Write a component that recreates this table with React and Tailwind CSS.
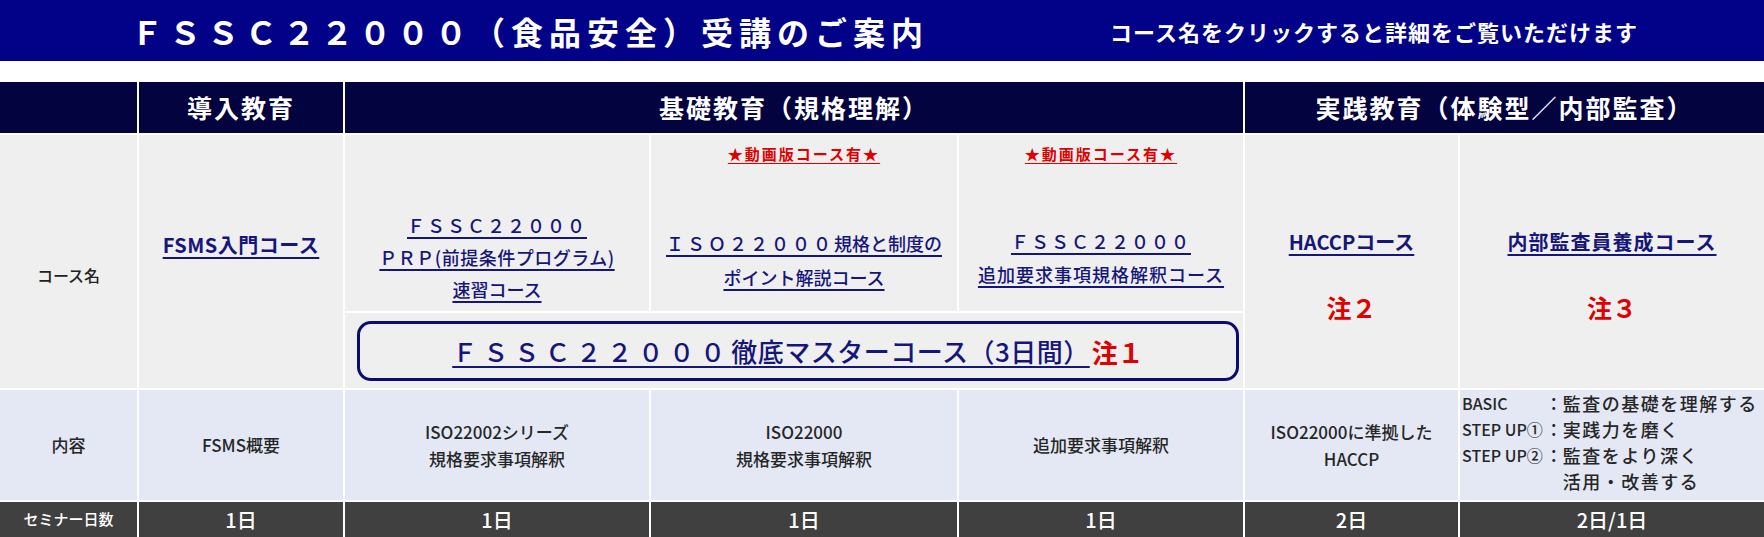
import React from "react";

const font = "font-['Noto_Sans_CJK_JP','Noto_Sans',sans-serif]";
const link = "text-[#16167a] underline underline-offset-[4px] decoration-[1.5px]";

function Star() {
  return (
    <div className="pt-[9px] text-[15px] leading-[20px] font-bold tracking-[2px] text-[#e00000] underline underline-offset-[3px]">
      ★動画版コース有★
    </div>
  );
}

export default function App() {
  return (
    <div className={`w-[1764px] h-[537px] bg-white ${font}`}>
      {/* banner */}
      <div className="h-[61px] bg-[#020289] flex items-center text-white">
        <div className="pl-[131px] text-[32px] font-bold tracking-[6px] leading-none whitespace-nowrap">
          ＦＳＳＣ２２０００（食品安全）受講のご案内
        </div>
        <div className="ml-auto mr-[126px] text-[22px] font-bold tracking-[1px] leading-none whitespace-nowrap">
          コース名をクリックすると詳細をご覧いただけます
        </div>
      </div>

      <div className="mt-[21px] grid grid-cols-[137px_204px_304px_306px_284px_213px_304px] grid-rows-[51px_176px_75px_110px_35px] gap-[2px] bg-white">
        {/* header row */}
        <div className="bg-[#03033f]" />
        <div className="bg-[#03033f] flex items-center justify-center text-white text-[25px] font-bold tracking-[2px]">
          導入教育
        </div>
        <div className="col-span-3 bg-[#03033f] flex items-center justify-center text-white text-[25px] font-bold tracking-[2px]">
          基礎教育（規格理解）
        </div>
        <div className="col-span-2 bg-[#03033f] flex items-center justify-center text-white text-[25px] font-bold tracking-[2px]">
          実践教育（体験型／内部監査）
        </div>

        {/* course name row */}
        <div className="row-span-2 bg-[#efefef] flex items-center justify-center pt-[27px] text-[16px] font-medium text-[#222]">
          コース名
        </div>
        <div className="row-span-2 bg-[#efefef] flex justify-center pt-[96px]">
          <span className={`${link} text-[20px] leading-[28px] font-bold tracking-[0.5px] h-fit`}>FSMS入門コース</span>
        </div>
        <div className="bg-[#efefef] flex flex-col items-center pt-[74px] text-[18px] leading-[32px] font-medium">
          <span className={`${link} tracking-[2px]`}>ＦＳＳＣ２２０００</span>
          <span className={`${link} tracking-[0.5px]`}>ＰＲＰ(前提条件プログラム)</span>
          <span className={link}>速習コース</span>
        </div>
        <div className="bg-[#efefef] flex flex-col items-center">
          <Star />
          <div className="mt-[62px] flex flex-col items-center text-[18px] leading-[34px] font-medium whitespace-nowrap">
            <span className={link}>
              <span className="tracking-[3px]">ＩＳＯ２２０００</span>規格と制度の
            </span>
            <span className={link}>ポイント解説コース</span>
          </div>
        </div>
        <div className="bg-[#efefef] flex flex-col items-center">
          <Star />
          <div className="mt-[61px] flex flex-col items-center text-[18px] leading-[33px] font-medium whitespace-nowrap">
            <span className={`${link} tracking-[2px]`}>ＦＳＳＣ２２０００</span>
            <span className={`${link} tracking-[1px]`}>追加要求事項規格解釈コース</span>
          </div>
        </div>
        <div className="row-span-2 bg-[#efefef] flex flex-col items-center pt-[93px]">
          <span className={`${link} text-[20px] leading-[28px] font-bold`}>HACCPコース</span>
          <span className="mt-[35px] text-[25px] leading-[32px] font-bold text-[#e00000]">注２</span>
        </div>
        <div className="row-span-2 bg-[#efefef] flex flex-col items-center pt-[93px]">
          <span className={`${link} text-[20px] leading-[28px] font-bold tracking-[1px]`}>内部監査員養成コース</span>
          <span className="mt-[35px] text-[25px] leading-[32px] font-bold text-[#e00000]">注３</span>
        </div>

        {/* master course */}
        <div className="col-span-3 bg-[#efefef] pt-[8px] pl-[12px] pr-[4px]">
          <div className="h-[60px] rounded-[14px] border-[3px] border-[#0c0c70] flex items-center justify-center font-medium whitespace-nowrap">
            <span className={`${link} decoration-[2px]`}>
              <span className="text-[25px] tracking-[6px]">ＦＳＳＣ２２０００</span>
              <span className="text-[26px] tracking-[0.5px]">徹底マスターコース（3日間）</span>
            </span>
            <span className="text-[26px] text-[#e00000] font-bold pl-[2px]">注１</span>
          </div>
        </div>

        {/* content row */}
        <div className="bg-[#e4e8f4] flex items-center justify-center text-[17px] font-medium text-[#262626]">内容</div>
        <div className="bg-[#e4e8f4] flex items-center justify-center text-[17px] font-medium text-[#262626]">FSMS概要</div>
        <div className="bg-[#e4e8f4] flex flex-col items-center justify-center text-[17px] leading-[27px] font-medium text-[#262626]">
          <span>ISO22002シリーズ</span>
          <span>規格要求事項解釈</span>
        </div>
        <div className="bg-[#e4e8f4] flex flex-col items-center justify-center text-[17px] leading-[27px] font-medium text-[#262626]">
          <span>ISO22000</span>
          <span>規格要求事項解釈</span>
        </div>
        <div className="bg-[#e4e8f4] flex items-center justify-center text-[17px] font-medium text-[#262626]">追加要求事項解釈</div>
        <div className="bg-[#e4e8f4] flex flex-col items-center justify-center text-[17px] leading-[27px] font-medium text-[#262626]">
          <span>ISO22000に準拠した</span>
          <span>HACCP</span>
        </div>
        <div className="bg-[#e4e8f4] pl-[2px] grid grid-cols-[max-content_max-content_1fr] content-start leading-[26px] text-[#262626] font-medium whitespace-nowrap">
          <span className="text-[16px]">BASIC</span>
          <span className="text-[18px] pl-[2px]">：</span>
          <span className="text-[18px] tracking-[1.5px]">監査の基礎を理解する</span>
          <span className="text-[16px]">STEP UP①</span>
          <span className="text-[18px] pl-[2px]">：</span>
          <span className="text-[18px] tracking-[1.5px]">実践力を磨く</span>
          <span className="text-[16px]">STEP UP②</span>
          <span className="text-[18px] pl-[2px]">：</span>
          <span className="text-[18px] tracking-[1.5px]">監査をより深く</span>
          <span />
          <span />
          <span className="text-[18px] tracking-[1.5px]">活用・改善する</span>
        </div>

        {/* seminar days */}
        <div className="bg-[#404040] flex items-center justify-center text-white text-[15px] font-medium">セミナー日数</div>
        {["1日", "1日", "1日", "1日", "2日", "2日/1日"].map((d, i) => (
          <div key={i} className="bg-[#404040] flex items-center justify-center text-white text-[20px] font-medium">
            {d}
          </div>
        ))}
      </div>
    </div>
  );
}
